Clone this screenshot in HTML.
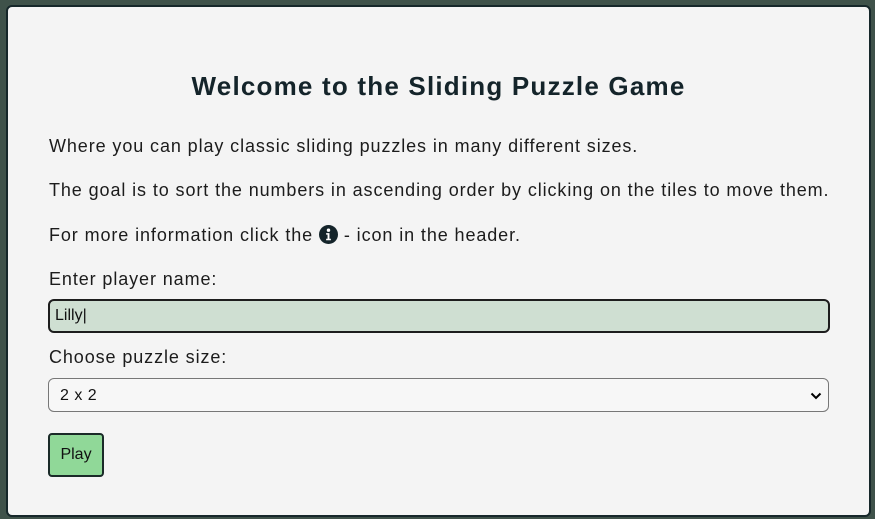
<!DOCTYPE html>
<html><head><style>
html,body{margin:0;width:875px;height:519px;overflow:hidden;background:#3f524a;font-family:"Liberation Sans",sans-serif;}
.dlg{position:absolute;left:6px;top:5px;width:861px;height:508px;background:#f4f4f4;border:2px solid #16272a;border-radius:6px;}
h1{position:absolute;left:0;right:0;top:64px;margin:0;text-align:center;font-size:26px;font-weight:bold;color:#14242a;letter-spacing:1.2px;}
p{position:absolute;left:41px;margin:0;font-size:18px;color:#1c1c1c;letter-spacing:0.9px;}
.inp{position:absolute;left:40px;top:292px;width:778px;height:30px;background:#cfdfd2;border:2px solid #1d1d1d;border-radius:6px;box-sizing:content-box;}
.inp span{position:absolute;left:5px;top:6px;font-size:16px;color:#111;}
.sel{position:absolute;left:40px;top:371px;width:779px;height:32px;background:#f7f7f7;border:1px solid #777;border-radius:6px;}
.sel span{position:absolute;left:11px;top:8px;font-size:16px;color:#111;letter-spacing:0.5px;}
.btn{position:absolute;left:40px;top:426px;width:52px;height:40px;background:#90d898;border:2px solid #1a2a28;border-radius:4px;font-size:16px;text-align:center;line-height:40px;color:#111;}
</style></head><body>
<div class="dlg">
<h1>Welcome to the Sliding Puzzle Game</h1>
<p style="top:129px">Where you can play classic sliding puzzles in many different sizes.</p>
<p style="top:173px">The goal is to sort the numbers in ascending order by clicking on the tiles to move them.</p>
<p style="top:218px">For more information click the <svg width="19" height="19" viewBox="0 0 20 20" style="vertical-align:-3px"><circle cx="10" cy="10" r="10" fill="#14242a"/><circle cx="10" cy="5.5" r="1.8" fill="#fff"/><path d="M7.5 8.5h3.5v6h1.5v1.6h-5v-1.6h1.5v-4.4h-1.5z" fill="#fff"/></svg> - icon in the header.</p>
<p style="top:262px">Enter player name:</p>
<div class="inp"><span>Lilly|</span></div>
<p style="top:340px">Choose puzzle size:</p>
<div class="sel"><span>2 x 2</span><svg width="12" height="8" viewBox="0 0 12 8" style="position:absolute;right:6px;top:13px"><path d="M1.5 1.5l4.5 4.5 4.5-4.5" stroke="#000" stroke-width="2" fill="none"/></svg></div>
<div class="btn">Play</div>
</div>
</body></html>
